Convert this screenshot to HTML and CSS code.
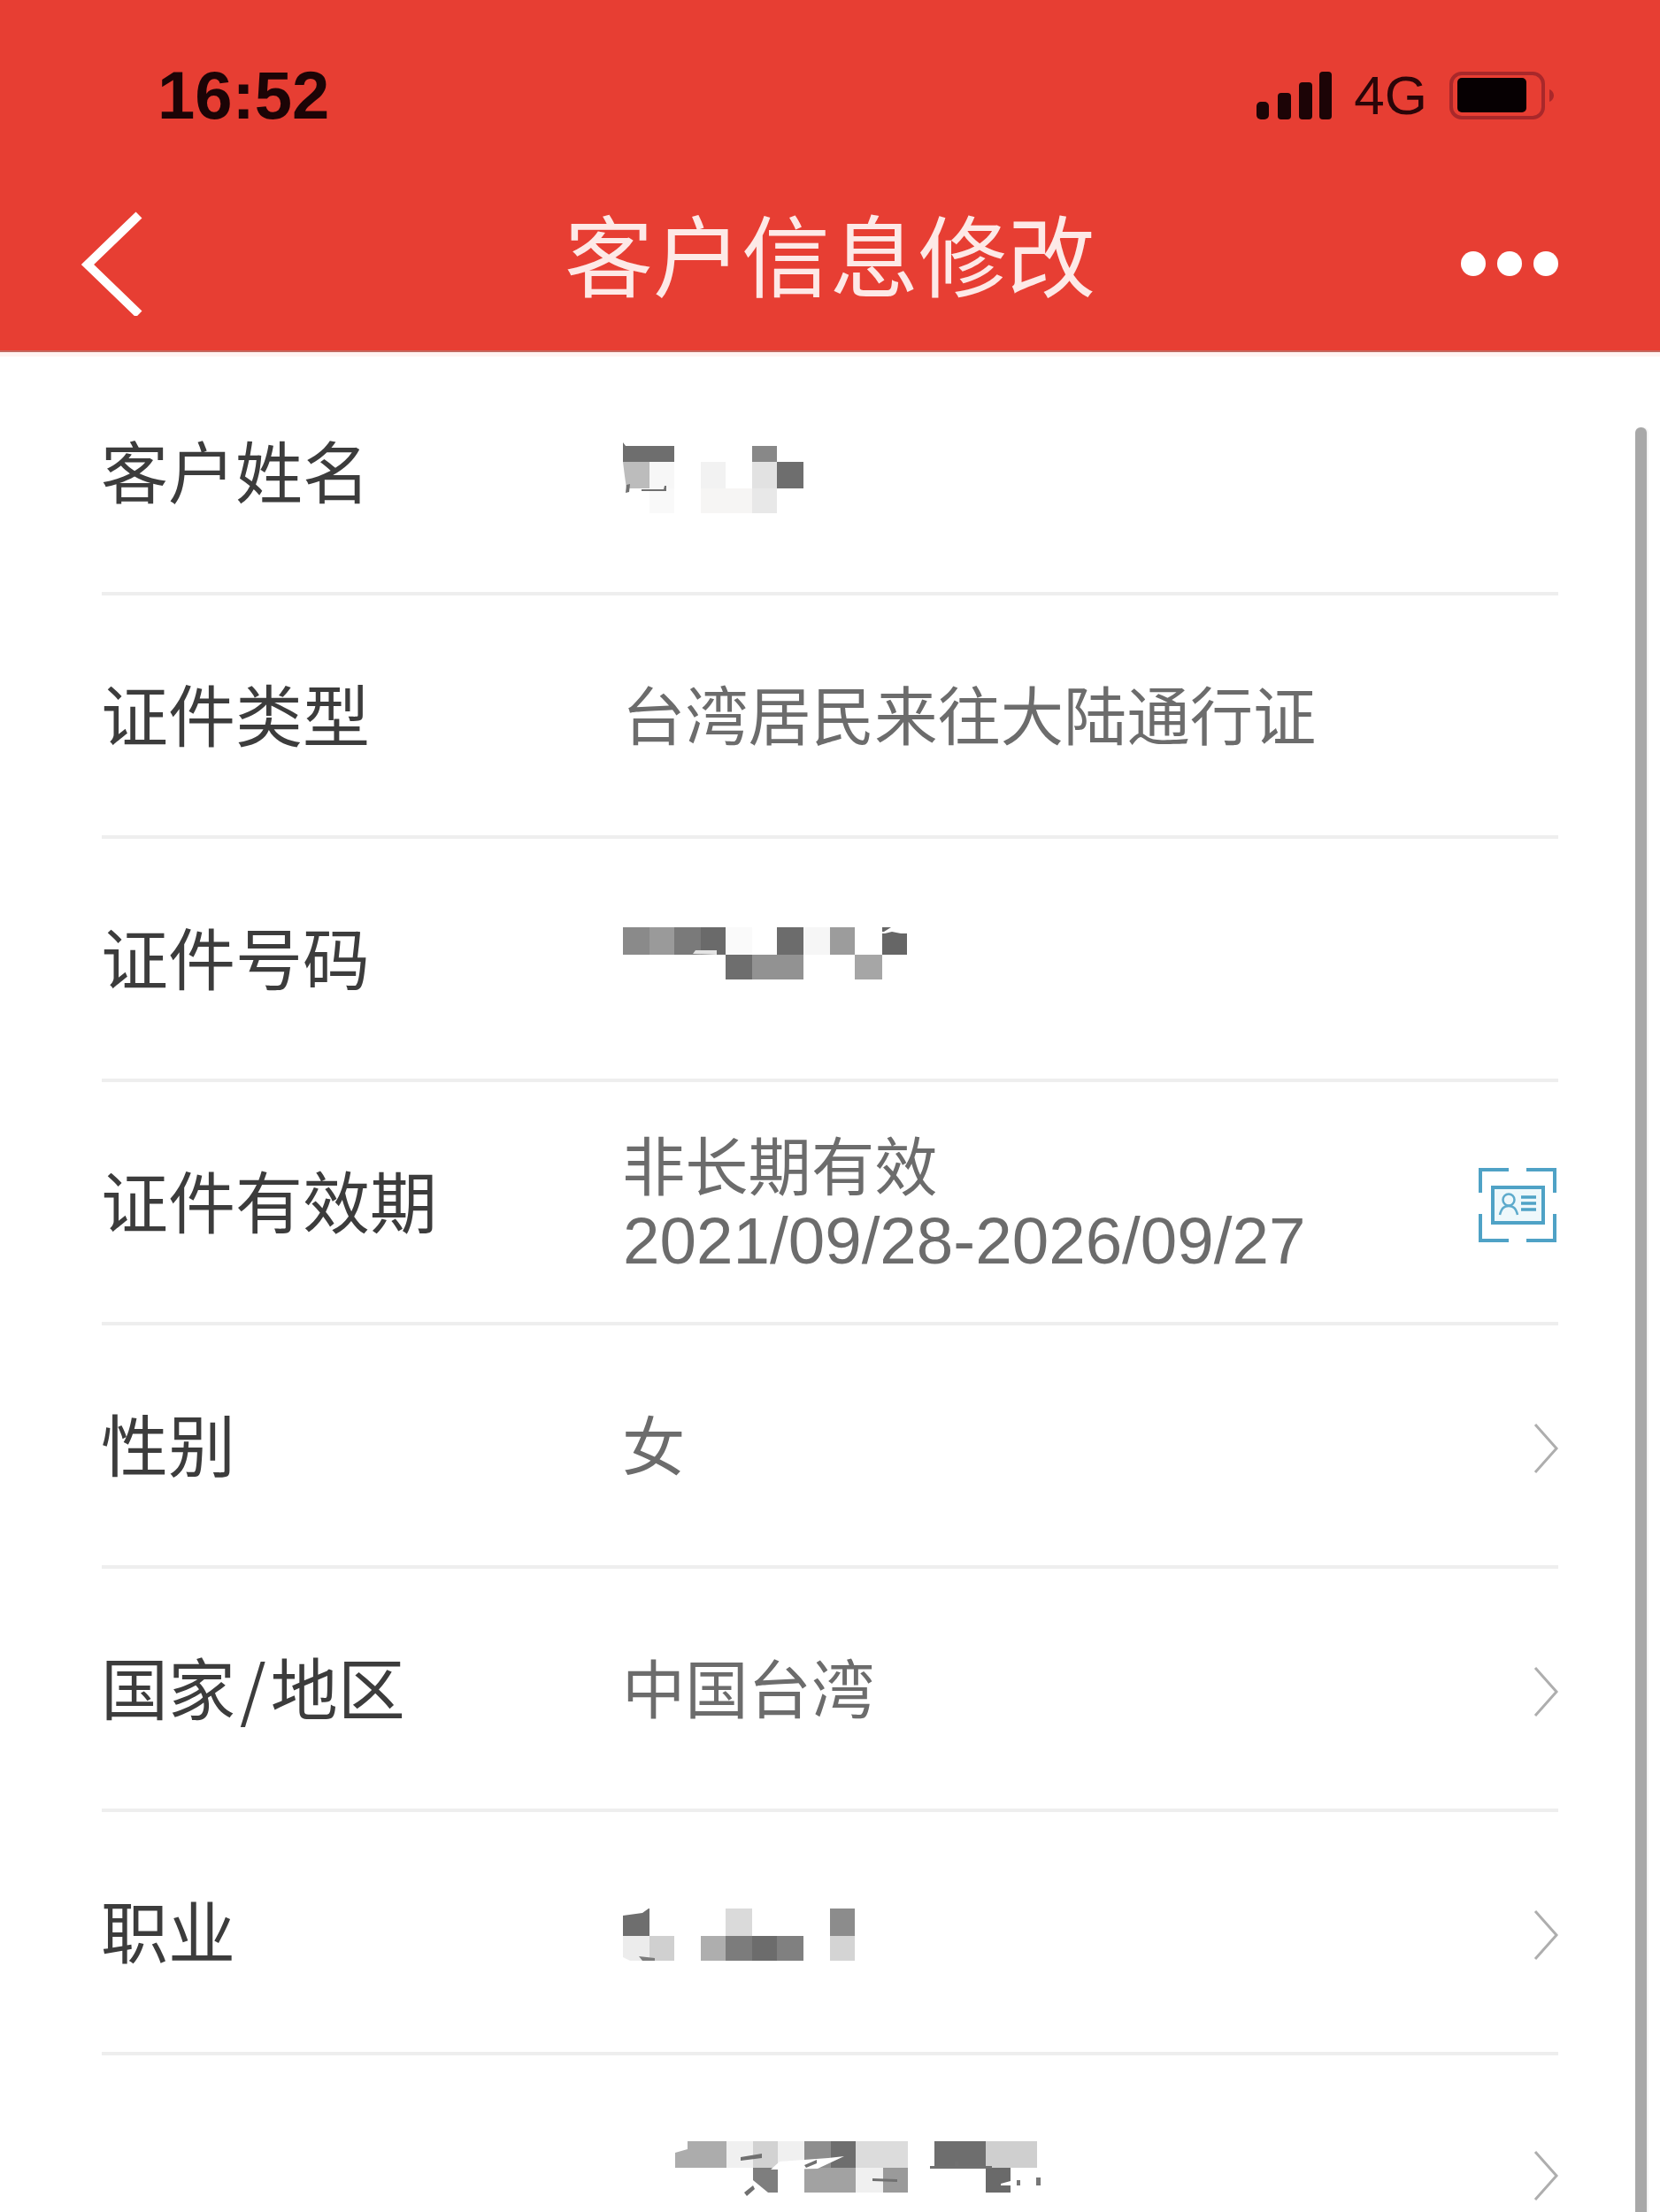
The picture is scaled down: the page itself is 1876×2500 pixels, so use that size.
FILE: index.html
```html
<!DOCTYPE html>
<html lang="zh-CN">
<head>
<meta charset="utf-8">
<title>客户信息修改</title>
<link rel="stylesheet" href="styles.css">
</head>
<body>
<div class="app">
  <header class="header">
    <div class="status">
      <span class="time">16:52</span>
      <div class="status-icons">
        <svg class="signal" viewBox="0 0 85 54" width="85" height="54">
          <rect x="0" y="34" width="14" height="20" rx="5" fill="#1c0406"/>
          <rect x="24" y="24" width="15" height="30" rx="4" fill="#1c0406"/>
          <rect x="48" y="12" width="15" height="42" rx="4" fill="#1c0406"/>
          <rect x="71" y="0" width="14" height="54" rx="4" fill="#1c0406"/>
        </svg>
        <span class="net">4G</span>
        <svg class="battery" viewBox="0 0 118 54" width="118" height="54">
          <rect x="2" y="2" width="104" height="50" rx="12" fill="none" stroke="#a9282a" stroke-width="4"/>
          <rect x="9" y="7" width="78" height="39" rx="5" fill="#060002"/>
          <path d="M113 20c3 1 5 4 5 7s-2 6-5 7z" fill="#a9282a"/>
        </svg>
      </div>
    </div>
    <nav class="nav">
      <svg class="back" viewBox="0 0 80 120" width="80" height="120">
        <path d="M74 6 L16 62 L74 118" fill="none" stroke="#fff" stroke-width="10"/>
      </svg>
      <h1 class="title">客户信息修改</h1>
      <svg class="more" viewBox="0 0 110 30" width="110" height="30">
        <circle cx="14" cy="15" r="14" fill="#fff"/>
        <circle cx="55" cy="15" r="14" fill="#fff"/>
        <circle cx="96" cy="15" r="14" fill="#fff"/>
      </svg>
    </nav>
  </header>

  <main class="list">
    <div class="row">
      <div class="label">客户姓名</div>
      <div class="value">
        <svg class="mosaic m-name" viewBox="704 500 204 80" width="204" height="80">
          <path d="M704 500l3 4h55v18h-58z" fill="#6e6e6e"/>
          <path d="M704 522h30v30h-26l-2-14z" fill="#bcbcbc"/>
          <rect x="734" y="522" width="28" height="30" fill="#f7f7f7"/>
          <rect x="734" y="552" width="28" height="28" fill="#f9f9f9"/>
          <path d="M708 548l4-1-1 9-4 1zM725 553h25l1-4h2v6h-28z" fill="#707070"/>
          <rect x="792" y="522" width="28" height="30" fill="#f2f2f2"/>
          <rect x="792" y="552" width="58" height="28" fill="#f6f5f4"/>
          <rect x="850" y="504" width="28" height="18" fill="#888"/>
          <rect x="850" y="522" width="28" height="30" fill="#e2e2e2"/>
          <rect x="850" y="552" width="28" height="28" fill="#e8e8e8"/>
          <rect x="878" y="522" width="30" height="30" fill="#6e6e6e"/>
        </svg>
      </div>
    </div>
    <div class="row">
      <div class="label">证件类型</div>
      <div class="value">台湾居民来往大陆通行证</div>
    </div>
    <div class="row">
      <div class="label">证件号码</div>
      <div class="value">
        <svg class="mosaic m-id" viewBox="704 1044 322 62" width="322" height="62">
          <rect x="704" y="1047" width="30" height="31" fill="#8a8a8a"/>
          <rect x="734" y="1047" width="28" height="31" fill="#9a9a9a"/>
          <rect x="762" y="1047" width="30" height="31" fill="#7a7a7a"/>
          <rect x="792" y="1047" width="28" height="31" fill="#6a6a6a"/>
          <path d="M783 1077l3-4h24v5z" fill="#e4e4e4"/>
          <rect x="820" y="1047" width="30" height="31" fill="#fafafa"/>
          <rect x="820" y="1078" width="30" height="28" fill="#6e6e6e"/>
          <rect x="850" y="1078" width="58" height="28" fill="#929292"/>
          <rect x="878" y="1047" width="30" height="31" fill="#6c6c6c"/>
          <rect x="908" y="1047" width="30" height="31" fill="#f6f6f6"/>
          <rect x="938" y="1047" width="28" height="31" fill="#9c9c9c"/>
          <rect x="966" y="1078" width="31" height="28" fill="#a6a6a6"/>
          <path d="M997 1054h3l8-2 10 2h7v24h-28z" fill="#666"/>
          <path d="M997 1047l10 0-8 5h-2z" fill="#666"/>
        </svg>
      </div>
    </div>
    <div class="row">
      <div class="label">证件有效期</div>
      <div class="value value-lines">
        <div>非长期有效</div>
        <div class="date">2021/09/28-2026/09/27</div>
      </div>
      <svg class="id-icon" viewBox="0 0 88 88" width="88" height="88">
        <path d="M2 30V4h32M54 4h32v26M2 54v30h32M54 84h32V54" fill="none" stroke="#4fa2c6" stroke-width="4"/>
        <rect x="16" y="24" width="57" height="40" fill="#eef8fb" stroke="#4fa2c6" stroke-width="4"/>
        <circle cx="34" cy="38" r="6.5" fill="none" stroke="#5eabcc" stroke-width="2.5"/>
        <path d="M24 55c2-8 5-10 10-10s8 2 10 10" fill="none" stroke="#5eabcc" stroke-width="2.5"/>
        <path d="M48 35h17M48 42h17M48 49h17" fill="none" stroke="#4fa2c6" stroke-width="3.5"/>
      </svg>
    </div>
    <div class="row">
      <div class="label">性别</div>
      <div class="value">女</div>
      <svg class="chev" viewBox="0 0 28 58" width="28" height="58"><path d="M2 2 L26 29 L2 56" fill="none" stroke="#aeaeae" stroke-width="3"/></svg>
    </div>
    <div class="row">
      <div class="label">国家<span class="sep">/</span>地区</div>
      <div class="value">中国台湾</div>
      <svg class="chev" viewBox="0 0 28 58" width="28" height="58"><path d="M2 2 L26 29 L2 56" fill="none" stroke="#aeaeae" stroke-width="3"/></svg>
    </div>
    <div class="row">
      <div class="label">职业</div>
      <div class="value">
        <svg class="mosaic m-job" viewBox="704 2156 262 62" width="262" height="62">
          <path d="M704 2165l22-3 7-5 1 0v31h-30z" fill="#6e6e6e"/>
          <path d="M704 2188h30v28h-22l-8-4z" fill="#ececec"/>
          <rect x="734" y="2188" width="28" height="28" fill="#d0d0d0"/>
          <path d="M722 2211l18 2v3h-14z" fill="#7c7c7c"/>
          <rect x="820" y="2157" width="30" height="31" fill="#dadada"/>
          <rect x="792" y="2188" width="28" height="28" fill="#aeaeae"/>
          <rect x="820" y="2188" width="30" height="28" fill="#7c7c7c"/>
          <rect x="850" y="2188" width="28" height="28" fill="#6c6c6c"/>
          <rect x="878" y="2188" width="30" height="28" fill="#808080"/>
          <rect x="938" y="2157" width="28" height="31" fill="#8c8c8c"/>
          <rect x="938" y="2188" width="28" height="28" fill="#d4d4d4"/>
        </svg>
      </div>
      <svg class="chev" viewBox="0 0 28 58" width="28" height="58"><path d="M2 2 L26 29 L2 56" fill="none" stroke="#aeaeae" stroke-width="3"/></svg>
    </div>
    <div class="row row-last">
      <div class="label"></div>
      <div class="value">
        <svg class="mosaic m-last" viewBox="760 2420 426 80" width="426" height="80">
          <path d="M762 2433l14-4 0-9h44v30h-58z" fill="#acacac"/>
          <rect x="820" y="2420" width="30" height="30" fill="#f0f0f0"/>
          <rect x="850" y="2420" width="28" height="30" fill="#d2d2d2"/>
          <rect x="878" y="2420" width="30" height="30" fill="#f0f0f0"/>
          <rect x="908" y="2420" width="30" height="30" fill="#8e8e8e"/>
          <rect x="938" y="2420" width="28" height="30" fill="#6e6e6e"/>
          <rect x="966" y="2420" width="59" height="30" fill="#dcdcdc"/>
          <rect x="1055" y="2420" width="58" height="28" fill="#6e6e6e"/>
          <rect x="1113" y="2420" width="58" height="30" fill="#cfcfcf"/>
          <path d="M850 2450h28v28h-11l-17-14z" fill="#7e7e7e"/>
          <rect x="908" y="2450" width="58" height="28" fill="#a2a2a2"/>
          <rect x="966" y="2450" width="31" height="28" fill="#f0f0f0"/>
          <rect x="997" y="2450" width="28" height="28" fill="#9a9a9a"/>
          <rect x="1113" y="2450" width="28" height="28" fill="#6a6a6a"/>
          <path d="M870 2452l10-9 55-4 18-2-30 14-40 1z" fill="#fff"/>
          <path d="M836 2438l24-4 0 5-24 3zM908 2447l14-6 0 4-12 5zM985 2462l28 1 0 3-28-1zM1050 2448h70v3h-70zM1078 2443h4v6h-4zM840 2478l10-8 2 4-9 8z" fill="#707070"/>
          <path d="M1130 2468l11-3v5h-11z" fill="#fff"/>
          <rect x="1148" y="2464" width="4" height="6" fill="#777"/>
          <rect x="1170" y="2461" width="5" height="9" fill="#777"/>
        </svg>
      </div>
      <svg class="chev chev-last" viewBox="0 0 28 58" width="28" height="58"><path d="M2 2 L26 29 L2 56" fill="none" stroke="#aeaeae" stroke-width="3"/></svg>
    </div>
  </main>
  <div class="scrollbar"></div>
</div>
</body>
</html>
```
FILE: styles.css
```css
* { box-sizing: border-box; }
html, body { margin: 0; padding: 0; background: #fff; }
.app {
  position: relative;
  width: 1876px;
  height: 2500px;
  overflow: hidden;
  font-family: "Noto Sans CJK SC", "Liberation Sans", sans-serif;
}
.header {
  height: 398px;
  background: #e73e33;
  border-bottom: 2px solid #c4695f;
  box-shadow: 0 5px 0 #fff4f2;
}
.status {
  height: 200px;
  padding: 16px 120px 0 178px;
  display: flex;
  align-items: center;
  justify-content: space-between;
}
.time {
  font-family: "Liberation Sans", Arial, sans-serif;
  font-weight: 700;
  font-size: 76px;
  line-height: 1;
  color: #1c0406;
}
.status-icons { display: flex; align-items: center; gap: 25px; }
.signal, .battery { display: block; }
.net {
  font-family: "Liberation Sans", Arial, sans-serif;
  font-size: 62px;
  line-height: 1;
  color: #2a0508;
}
.nav {
  height: 196px;
  padding: 0 115px;
  display: grid;
  grid-template-columns: 1fr auto 1fr;
  align-items: center;
}
.back { display: block; margin-left: -32px; margin-top: -2px; }
.title {
  margin: 0 0 26px;
  font-size: 100px;
  font-weight: 400;
  line-height: 1.2;
  color: #fde9e7;
}
.more { display: block; justify-self: end; }
.list { padding: 0 115px; }
.row {
  display: flex;
  align-items: center;
  height: 275px;
  border-bottom: 4px solid #eeeeee;
}
.row-last { border-bottom: 0; align-items: flex-start; padding-top: 97px; }
.label {
  flex: 0 0 590px;
  margin-bottom: 6px;
  margin-left: -1px;
  padding-right: 1px;
  font-size: 76px;
  line-height: 1.2;
  color: #3c3c3c;
}
.sep { margin: 0 5px; }
.value {
  flex: 1 1 auto;
  margin-left: -1px;
  margin-bottom: 6px;
  font-size: 71.3px;
  line-height: 83px;
  color: #6c6c6c;
}
.date {
  margin-left: 1px;
  margin-top: 5px;
  font-family: "Liberation Sans", Arial, sans-serif;
  font-size: 74.6px;
}
.value-lines { margin-bottom: 0; }
.mosaic { display: block; margin-left: 1px; }
.m-name { margin-top: 18px; }
.m-id { margin-bottom: 10px; }
.m-job { margin-top: 12px; }
.m-last { margin-left: 58px; }
.id-icon { display: block; margin-right: 2px; margin-top: 6px; }
.chev { display: block; flex: none; margin-top: 6px; }
.chev-last { margin-top: 10px; }
.scrollbar {
  position: absolute;
  top: 483px;
  left: 1848px;
  width: 13px;
  height: 2017px;
  background: #a8a8a8;
  border-radius: 6px 6px 0 0;
  box-shadow: 2px 0 0 #f4f4f4;
}
```
